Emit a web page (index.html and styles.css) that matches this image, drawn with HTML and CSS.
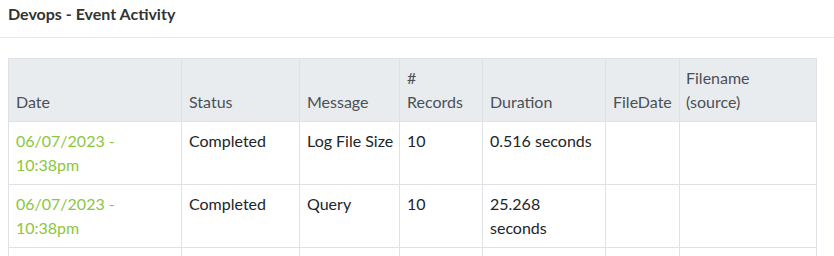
FILE: index.html
```html
<!DOCTYPE html>
<html>
<head>
<meta charset="utf-8">
<link rel="stylesheet" href="styles.css">
</head>
<body>
<header class="page-header">
  <h1 class="title">Devops - Event Activity</h1>
</header>
<main class="content">
  <table class="activity">
    <colgroup>
      <col class="c-date"><col class="c-status"><col class="c-msg"><col class="c-rec"><col class="c-dur"><col class="c-fdate"><col class="c-fname">
    </colgroup>
    <thead>
      <tr>
        <th>Date</th><th>Status</th><th>Message</th><th># Records</th><th>Duration</th><th>FileDate</th><th class="last">Filename (source)</th>
      </tr>
    </thead>
    <tbody>
      <tr>
        <td class="date">06/07/2023 - 10:38pm</td><td>Completed</td><td class="msg">Log File Size</td><td>10</td><td>0.516 seconds</td><td></td><td class="last"></td>
      </tr>
      <tr>
        <td class="date">06/07/2023 - 10:38pm</td><td>Completed</td><td class="msg">Query</td><td>10</td><td>25.268 seconds</td><td></td><td class="last"></td>
      </tr>
      <tr class="partial">
        <td></td><td></td><td></td><td></td><td></td><td></td><td class="last"></td>
      </tr>
    </tbody>
  </table>
</main>
</body>
</html>
```

FILE: styles.css
```css
html, body {
  margin: 0;
  padding: 0;
  background: #fff;
  font-family: Lato, "Open Sans", sans-serif;
  color: #212529;
}
.page-header {
  height: 38px;
  border-bottom: 1px solid #e6e6e6;
  padding: 0 8px;
  box-sizing: border-box;
}
.title {
  margin: 0;
  padding-top: 4px;
  font-size: 16px;
  line-height: 20px;
  font-weight: 700;
  color: #333;
}
.content {
  padding: 20px 18px 0 8px;
}
.activity {
  width: 808px;
  table-layout: fixed;
  border-collapse: collapse;
  font-size: 16px;
  line-height: 24px;
}
.c-date { width: 173px; }
.c-status { width: 118px; }
.c-msg { width: 100px; }
.c-rec { width: 83px; }
.c-dur { width: 123px; }
.c-fdate { width: 74px; }
.c-fname { width: 137px; }
.activity th,
.activity td {
  border: 1px solid #dee2e6;
  padding: 7px;
  text-align: left;
  vertical-align: top;
}
.activity td.msg {
  white-space: nowrap;
}
.activity th.last,
.activity td.last {
  padding-left: 6px;
  padding-right: 16px;
}
.activity th {
  background: #e9ecef;
  font-weight: 400;
  color: #495057;
  vertical-align: bottom;
}
.activity td {
  color: #212529;
}
.activity td.date {
  color: #8dc63f;
}
.partial td {
  height: 24px;
}
```
